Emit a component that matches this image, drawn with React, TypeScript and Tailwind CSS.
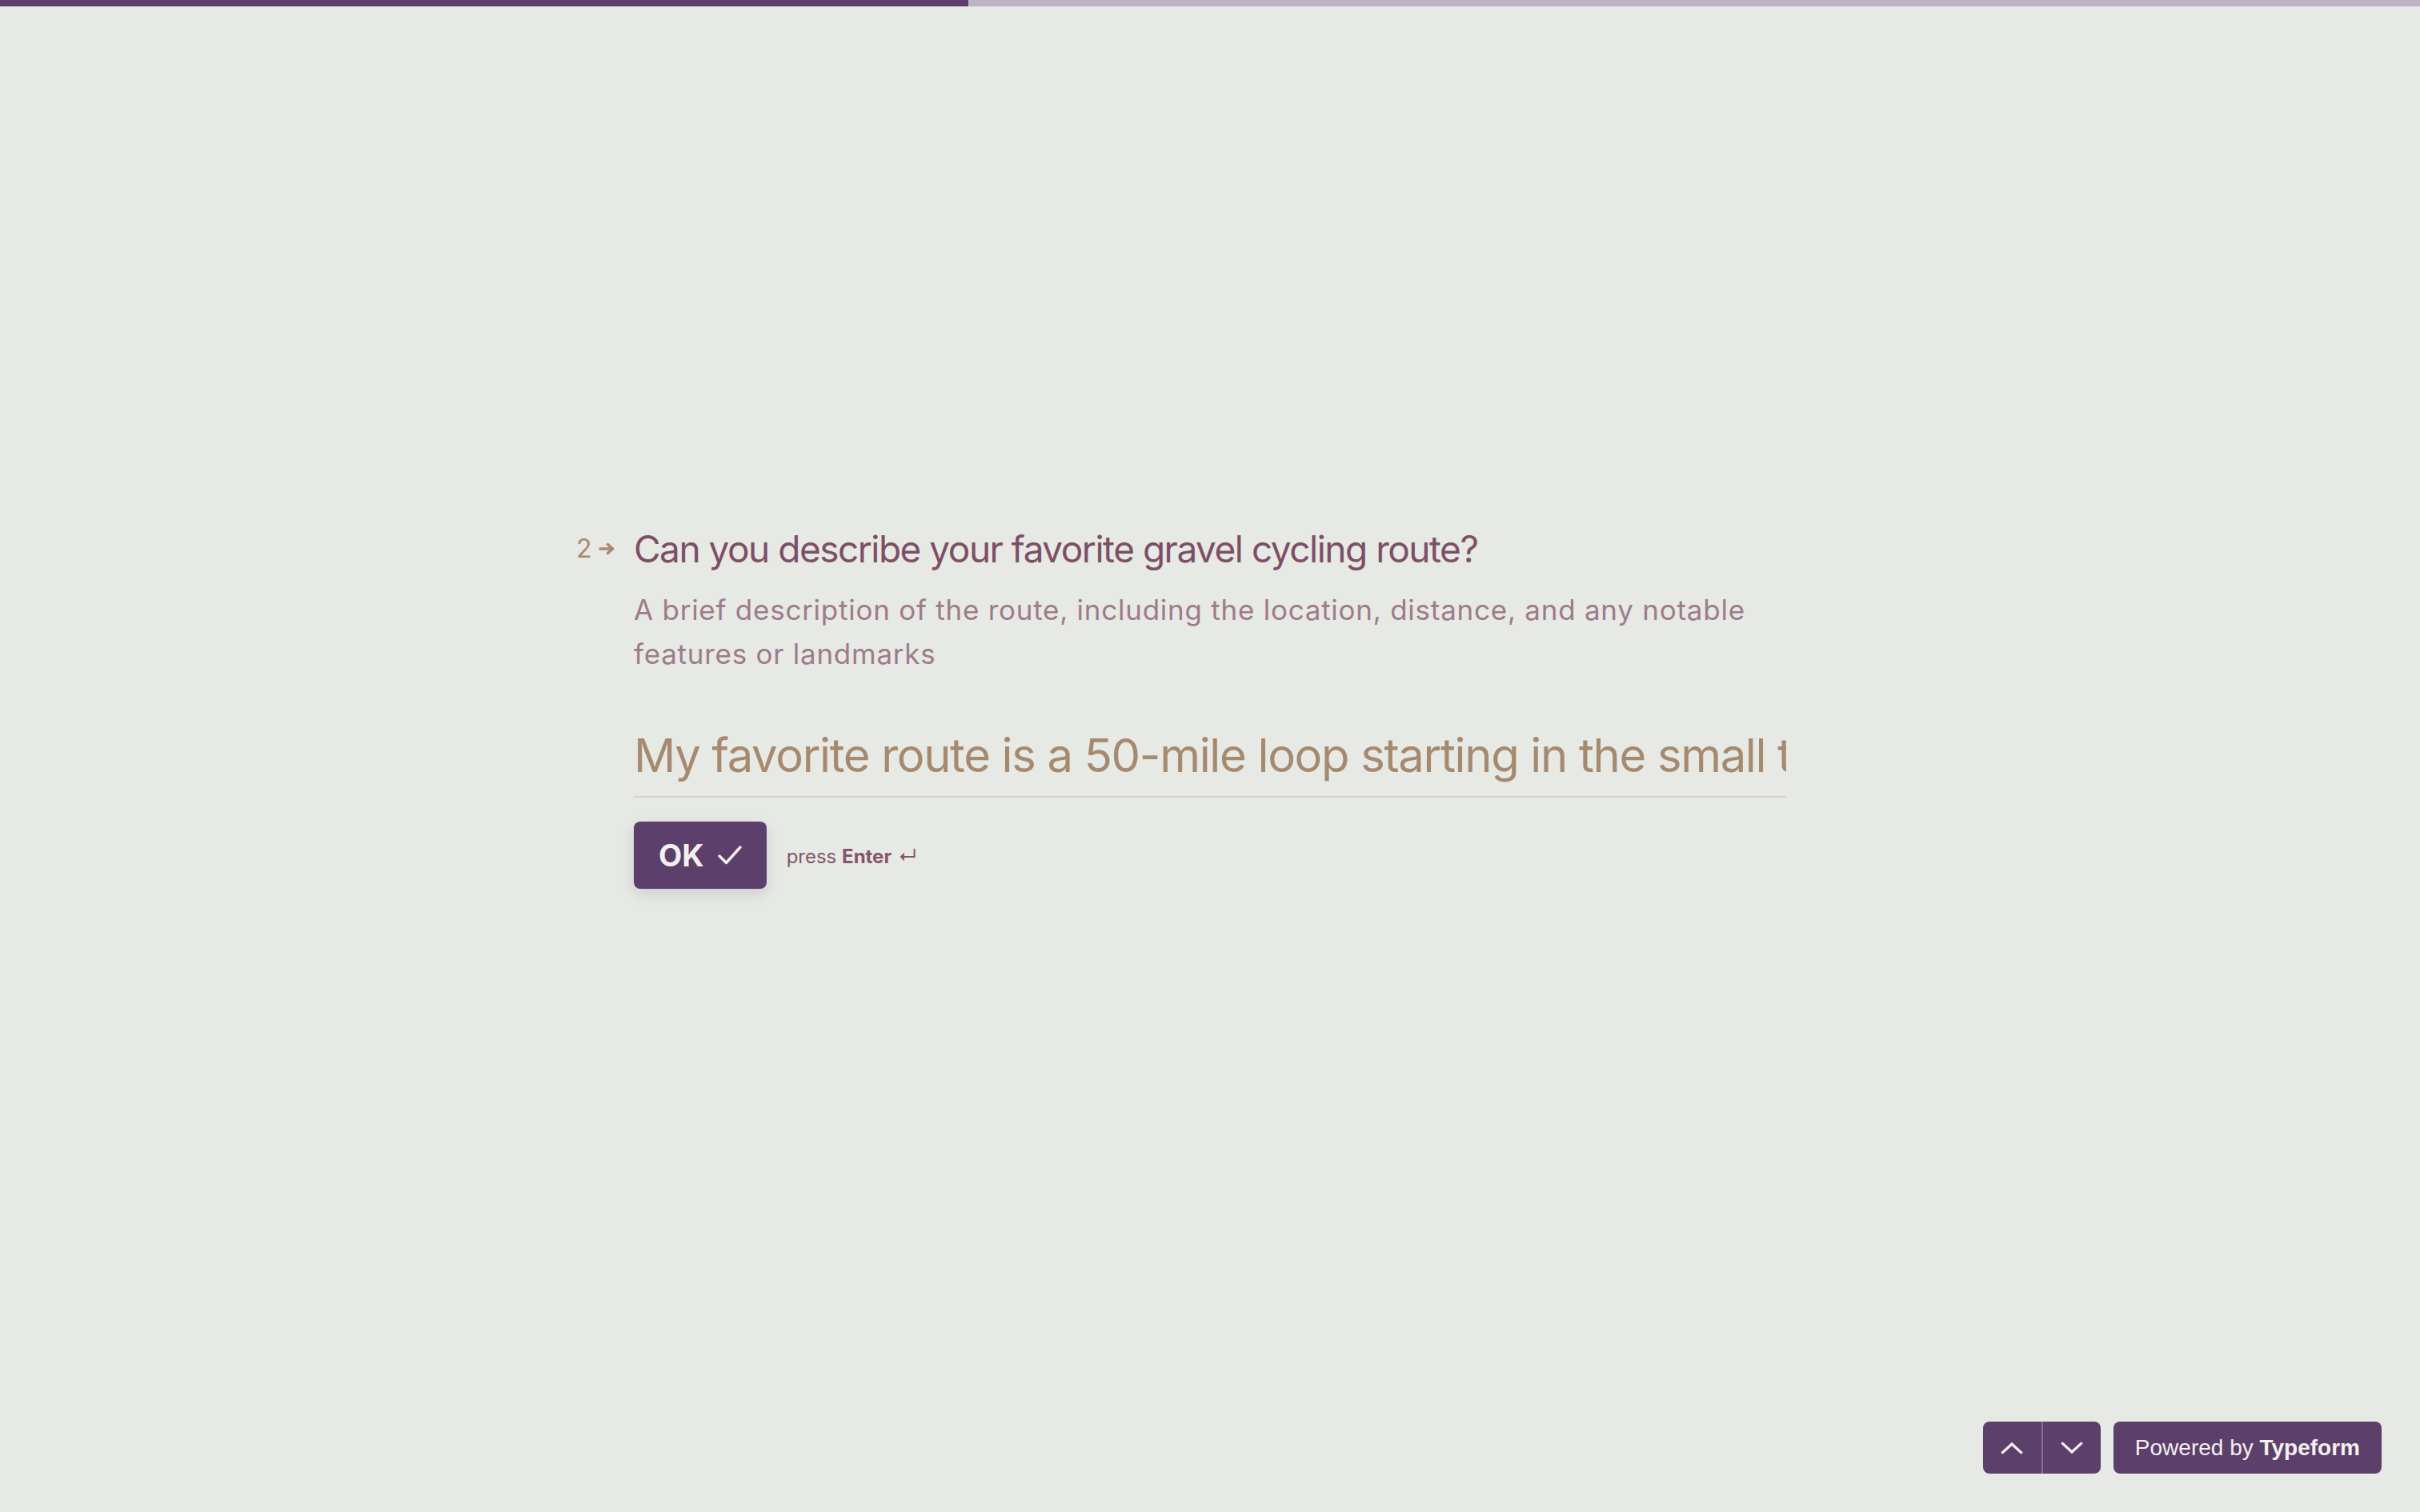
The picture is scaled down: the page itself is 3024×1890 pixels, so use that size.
import React from 'react';

const ArrowRight = () => (
  <svg width="22" height="16" viewBox="0 0 22 16" fill="none">
    <path d="M2 8h15" stroke="#a68a70" strokeWidth="3.4" strokeLinecap="round" />
    <path d="M11.5 2.5L17.5 8L11.5 13.5" stroke="#a68a70" strokeWidth="3.4" strokeLinecap="round" strokeLinejoin="round" />
  </svg>
);

const Check = () => (
  <svg width="30" height="26" viewBox="0 0 30 26" fill="none">
    <path d="M2 14L10.5 22.5L28 3" stroke="#f3f0ee" strokeWidth="3.4" strokeLinecap="round" strokeLinejoin="round" />
  </svg>
);

const Chevron = ({ up }: { up?: boolean }) => (
  <svg width="28" height="16" viewBox="0 0 28 16" fill="none" className={up ? 'rotate-180' : ''}>
    <path d="M2.5 2.5L14 13L25.5 2.5" stroke="#f3f0ee" strokeWidth="3.2" strokeLinecap="square" />
  </svg>
);

const App: React.FC = () => {
  return (
    <div className="h-screen w-full bg-[#e7e9e4] flex flex-col overflow-hidden font-['Inter',sans-serif]">
      {/* barra de progreso */}
      <div className="h-[8px] w-full bg-[#bdb3c2] shrink-0">
        <div className="h-full w-[40%] bg-[#5c3f6b]" />
      </div>

      <div className="flex-1 flex justify-center pt-[646px]">
        <div className="w-[1440px]">
          {/* pregunta */}
          <div className="flex items-start -ml-[72px]">
            <div className="w-[72px] h-[64px] flex items-center gap-[8px] text-[32px] leading-none text-[#a68a70] shrink-0">
              <span>2</span>
              <ArrowRight />
            </div>
            <h1 className="text-[46px] leading-[64px] text-[#7d4f67] tracking-[-1.5px]">
              Can you describe your favorite gravel cycling route?
            </h1>
          </div>

          <p className="mt-[17px] text-[35px] leading-[55px] text-[#9e7b8c] tracking-[0.75px] max-w-[1420px]">
            A brief description of the route, including the location, distance, and any notable features or landmarks
          </p>

          {/* respuesta */}
          <div className="mt-[63px] border-b-2 border-[#d8cfc5] pb-[15px] overflow-hidden whitespace-nowrap">
            <div className="text-[58px] leading-[72px] text-[#a68a70] tracking-[-1.35px]">
              My favorite route is a 50-mile loop starting in the small town of Hillsboro
            </div>
          </div>

          <div className="mt-[30px] flex items-center gap-[25px]">
            <button className="h-[84px] pl-[31px] pr-[31px] rounded-[8px] bg-[#5c3f6b] flex items-center gap-[17px] text-[38px] font-bold text-[#f3f0ee] shadow-[0_6px_18px_rgba(0,0,0,0.12)]">
              OK
              <Check />
            </button>
            <div className="text-[24px] text-[#83566e] flex items-center gap-[8px] pt-[4px]">
              <span>
                press <span className="font-bold">Enter</span>
              </span>
              <span className="text-[24px]">↵</span>
            </div>
          </div>
        </div>
      </div>

      {/* pie */}
      <div className="shrink-0 flex justify-end items-center gap-[16px] pr-[48px] pb-[48px]">
        <div className="flex h-[65px] rounded-[8px] bg-[#5c3f6b] overflow-hidden">
          <button className="w-[73px] flex items-center justify-center">
            <Chevron up />
          </button>
          <div className="w-[2px] bg-[#8a6d97]" />
          <button className="w-[72px] flex items-center justify-center">
            <Chevron />
          </button>
        </div>
        <div className="h-[65px] px-[27px] rounded-[8px] bg-[#5c3f6b] flex items-center text-[28px] text-[#f3f0ee] font-['Liberation_Sans',Arial,sans-serif]">
          Powered by&nbsp;<span className="font-bold">Typeform</span>
        </div>
      </div>
    </div>
  );
};

export default App;
